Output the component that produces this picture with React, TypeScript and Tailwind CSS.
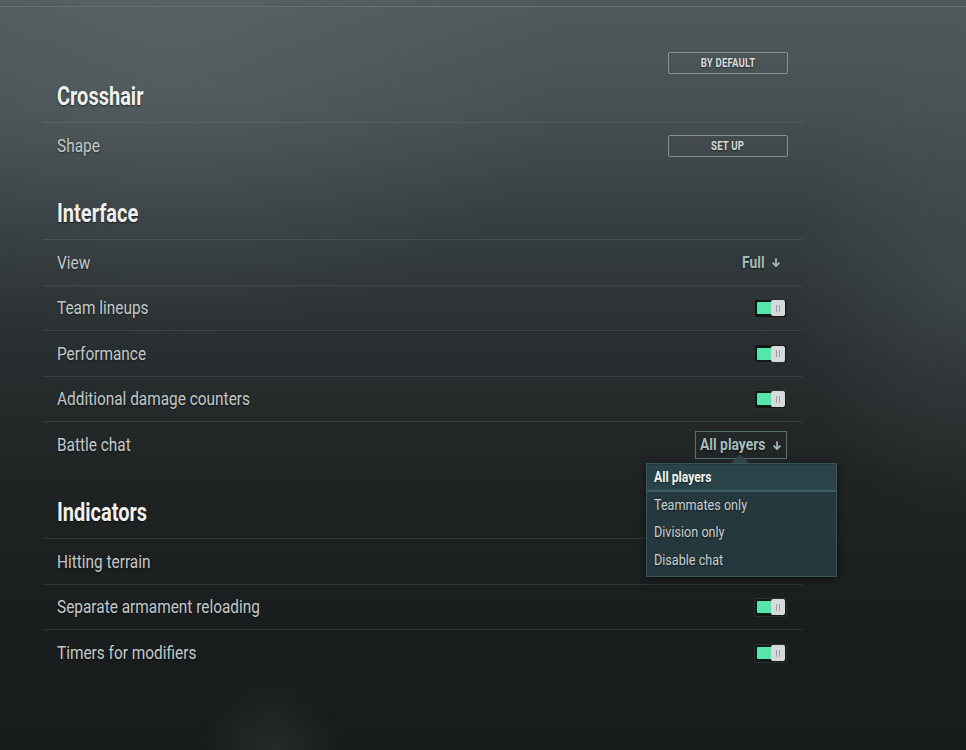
import React from "react";

const FONT = "font-['Roboto',_'Liberation_Sans',_sans-serif]";

function DownArrow({ className = "" }: { className?: string }) {
  return (
    <svg width="10" height="11" viewBox="0 0 10 11" className={`shrink-0 ${className}`} fill="none">
      <path d="M5 1.2V9" stroke="currentColor" strokeWidth="1.7" />
      <path d="M1.6 5.6L5 9L8.4 5.6" stroke="currentColor" strokeWidth="1.7" />
    </svg>
  );
}

function Toggle() {
  return (
    <div className="flex h-[19px] w-[33px] shrink-0 items-center rounded-[2px] border border-[#2b3031] bg-[#141717] pl-[2px] pr-[1px]">
      <div className="h-[12px] w-[15px] rounded-l-[1px] bg-[#55e6aa]" />
      <div className="flex h-[16px] w-[14px] items-center justify-center gap-[2px] rounded-[2px] bg-[#d7dada]">
        <div className="h-[7px] w-px bg-[#9a9e9e]" />
        <div className="h-[7px] w-px bg-[#9a9e9e]" />
      </div>
    </div>
  );
}

function Heading({ title, top }: { title: string; top: string }) {
  return (
    <div className={`${top} border-b border-white/[0.09] pb-[10px] pl-[14px]`}>
      <span className="inline-block origin-left scale-x-[0.8] text-[25px] font-bold leading-[28px] text-[#eef0f0] [text-shadow:0_1px_2px_rgba(0,0,0,0.6)]">
        {title}
      </span>
    </div>
  );
}

function Row({
  label,
  h,
  border = true,
  children,
}: {
  label: string;
  h: string;
  border?: boolean;
  children?: React.ReactNode;
}) {
  return (
    <div
      className={`relative flex ${h} items-center justify-between pl-[14px] pr-[16px] ${
        border ? "border-b border-white/[0.09]" : ""
      }`}
    >
      <span className="inline-block origin-left scale-x-[0.88] whitespace-nowrap text-[17.5px] leading-[20px] text-[#c3c9c9] [text-shadow:0_1px_2px_rgba(0,0,0,0.5)]">
        {label}
      </span>
      {children}
    </div>
  );
}

function OutlineButton({ label }: { label: string }) {
  return (
    <div className="flex h-[22px] w-[120px] items-center justify-center rounded-[2px] border border-[#9aa2a3]/80">
      <span className="inline-block scale-x-[0.8] text-[12px] font-bold tracking-[0.2px] text-[#d7dbdb] [text-shadow:0_1px_2px_rgba(0,0,0,0.5)]">
        {label}
      </span>
    </div>
  );
}

export default function App() {
  return (
    <div
      className={`${FONT} relative min-h-[750px] w-full overflow-hidden bg-[radial-gradient(ellipse_40%_35%_at_18%_10%,rgba(120,130,130,0.22),transparent),radial-gradient(ellipse_18%_32%_at_100%_38%,rgba(100,110,112,0.28),transparent),radial-gradient(circle_at_28%_100%,rgba(80,84,82,0.25),transparent_7%),linear-gradient(to_bottom,#505a5d_0%,#475053_14%,#363d40_30%,#282d2f_48%,#1f2323_65%,#1a1d1d_85%,#181b1b_100%)]`}
    >
      <div className="h-[7px] border-b border-[#6f797b]/70" />
      <div className="ml-[43px] w-[760px]">
        <div className="flex justify-end pr-[15px] pt-[45px]">
          <OutlineButton label="BY DEFAULT" />
        </div>
        <Heading title="Crosshair" top="pt-[9px]" />
        <Row label="Shape" h="h-[46px]" border={false}>
          <div className="-mr-px">
            <OutlineButton label="SET UP" />
          </div>
        </Row>

        <Heading title="Interface" top="pt-[31px]" />
        <Row label="View" h="h-[46px]">
          <div className="flex items-center pr-[6px] text-[#a3bcbc]">
            <div className="w-[22px]">
              <span className="inline-block origin-left scale-x-[0.84] text-[16.5px] font-bold leading-[20px] [text-shadow:0_1px_2px_rgba(0,0,0,0.6)]">
                Full
              </span>
            </div>
            <DownArrow className="ml-[7px]" />
          </div>
        </Row>
        <Row label="Team lineups" h="h-[45px]">
          <Toggle />
        </Row>
        <Row label="Performance" h="h-[46px]">
          <Toggle />
        </Row>
        <Row label="Additional damage counters" h="h-[45px]">
          <Toggle />
        </Row>
        <Row label="Battle chat" h="h-[46px]" border={false}>
          <div className="relative">
            <div className="flex h-[28px] w-[92px] items-center border border-[#587070] pl-[4px] text-[#a3bcbc]">
              <div className="w-[64px]">
                <span className="inline-block origin-left scale-x-[0.84] whitespace-nowrap text-[16.5px] font-bold leading-[20px] [text-shadow:0_1px_2px_rgba(0,0,0,0.6)]">
                  All players
                </span>
              </div>
              <DownArrow className="ml-[8px]" />
            </div>
            <div className="absolute left-[36px] top-[23px] z-20 h-0 w-0 border-x-[9px] border-b-[9px] border-x-transparent border-b-[#2c454b]" />
            <div className="absolute left-[-49px] top-[32px] z-10 w-[191px] border border-[#3b5458] bg-[#25383d] py-[1px] shadow-[0_2px_8px_rgba(0,0,0,0.5)]">
              <div className="flex h-[27px] items-center border-b-2 border-[#3a5e62] bg-[#2a4349] pl-[7px]">
                <span className="inline-block origin-left scale-x-[0.84] text-[14.5px] font-bold text-[#f2f4f4] [text-shadow:0_1px_2px_rgba(0,0,0,0.5)]">
                  All players
                </span>
              </div>
              {["Teammates only", "Division only", "Disable chat"].map((t) => (
                <div key={t} className="flex h-[27.5px] items-center pl-[7px]">
                  <span className="inline-block origin-left scale-x-[0.87] whitespace-nowrap text-[14.5px] text-[#c8d0d0] [text-shadow:0_1px_2px_rgba(0,0,0,0.5)]">
                    {t}
                  </span>
                </div>
              ))}
            </div>
          </div>
        </Row>

        <Heading title="Indicators" top="pt-[31px]" />
        <Row label="Hitting terrain" h="h-[46px]" />
        <Row label="Separate armament reloading" h="h-[45px]">
          <Toggle />
        </Row>
        <Row label="Timers for modifiers" h="h-[46px]" border={false}>
          <Toggle />
        </Row>
      </div>
    </div>
  );
}
